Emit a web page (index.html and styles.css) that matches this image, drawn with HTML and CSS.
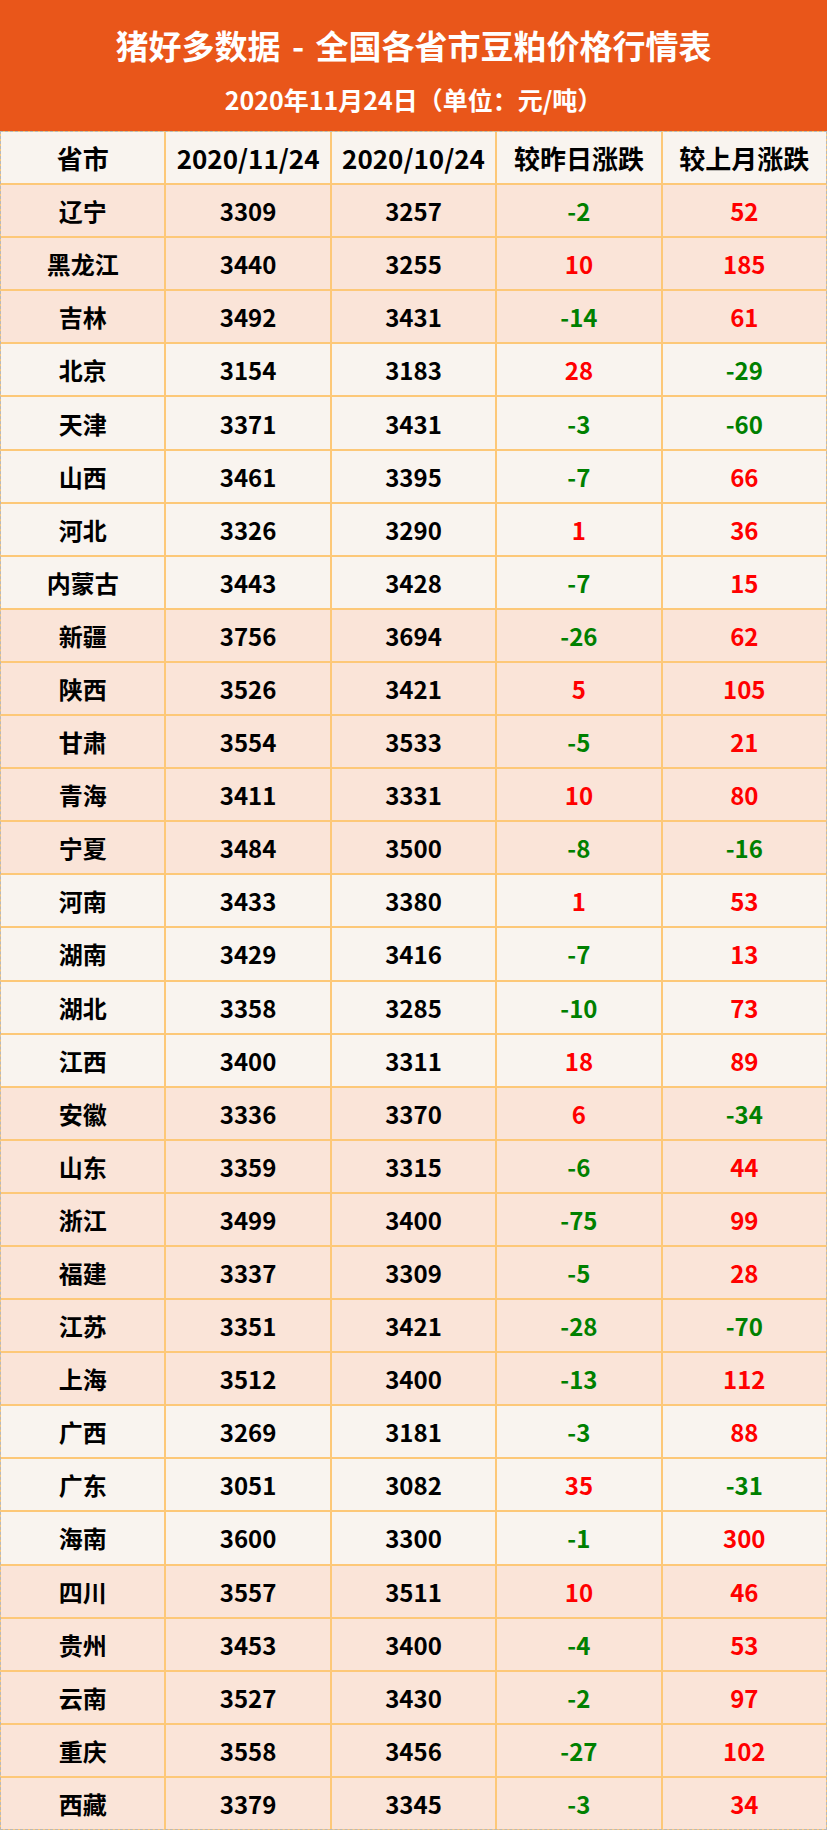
FILE: index.html
```html
<!DOCTYPE html>
<html lang="zh-CN">
<head>
<meta charset="utf-8">
<title>猪好多数据 - 全国各省市豆粕价格行情表</title>
<link rel="stylesheet" href="styles.css">
</head>
<body>
<div class="page">
  <header class="banner">
    <h1 class="title">猪好多数据 - 全国各省市豆粕价格行情表</h1>
    <p class="subtitle">2020年11月24日（单位：元/吨）</p>
  </header>
  <div class="table">
    <div class="row head"><div class="cell">省市</div><div class="cell">2020/11/24</div><div class="cell">2020/10/24</div><div class="cell">较昨日涨跌</div><div class="cell">较上月涨跌</div></div>
    <div class="row pink"><div class="cell">辽宁</div><div class="cell">3309</div><div class="cell">3257</div><div class="cell dn">-2</div><div class="cell up">52</div></div>
    <div class="row pink"><div class="cell">黑龙江</div><div class="cell">3440</div><div class="cell">3255</div><div class="cell up">10</div><div class="cell up">185</div></div>
    <div class="row pink"><div class="cell">吉林</div><div class="cell">3492</div><div class="cell">3431</div><div class="cell dn">-14</div><div class="cell up">61</div></div>
    <div class="row light"><div class="cell">北京</div><div class="cell">3154</div><div class="cell">3183</div><div class="cell up">28</div><div class="cell dn">-29</div></div>
    <div class="row light"><div class="cell">天津</div><div class="cell">3371</div><div class="cell">3431</div><div class="cell dn">-3</div><div class="cell dn">-60</div></div>
    <div class="row light"><div class="cell">山西</div><div class="cell">3461</div><div class="cell">3395</div><div class="cell dn">-7</div><div class="cell up">66</div></div>
    <div class="row light"><div class="cell">河北</div><div class="cell">3326</div><div class="cell">3290</div><div class="cell up">1</div><div class="cell up">36</div></div>
    <div class="row light"><div class="cell">内蒙古</div><div class="cell">3443</div><div class="cell">3428</div><div class="cell dn">-7</div><div class="cell up">15</div></div>
    <div class="row pink"><div class="cell">新疆</div><div class="cell">3756</div><div class="cell">3694</div><div class="cell dn">-26</div><div class="cell up">62</div></div>
    <div class="row pink"><div class="cell">陕西</div><div class="cell">3526</div><div class="cell">3421</div><div class="cell up">5</div><div class="cell up">105</div></div>
    <div class="row pink"><div class="cell">甘肃</div><div class="cell">3554</div><div class="cell">3533</div><div class="cell dn">-5</div><div class="cell up">21</div></div>
    <div class="row pink"><div class="cell">青海</div><div class="cell">3411</div><div class="cell">3331</div><div class="cell up">10</div><div class="cell up">80</div></div>
    <div class="row pink"><div class="cell">宁夏</div><div class="cell">3484</div><div class="cell">3500</div><div class="cell dn">-8</div><div class="cell dn">-16</div></div>
    <div class="row light"><div class="cell">河南</div><div class="cell">3433</div><div class="cell">3380</div><div class="cell up">1</div><div class="cell up">53</div></div>
    <div class="row light"><div class="cell">湖南</div><div class="cell">3429</div><div class="cell">3416</div><div class="cell dn">-7</div><div class="cell up">13</div></div>
    <div class="row light"><div class="cell">湖北</div><div class="cell">3358</div><div class="cell">3285</div><div class="cell dn">-10</div><div class="cell up">73</div></div>
    <div class="row light"><div class="cell">江西</div><div class="cell">3400</div><div class="cell">3311</div><div class="cell up">18</div><div class="cell up">89</div></div>
    <div class="row pink"><div class="cell">安徽</div><div class="cell">3336</div><div class="cell">3370</div><div class="cell up">6</div><div class="cell dn">-34</div></div>
    <div class="row pink"><div class="cell">山东</div><div class="cell">3359</div><div class="cell">3315</div><div class="cell dn">-6</div><div class="cell up">44</div></div>
    <div class="row pink"><div class="cell">浙江</div><div class="cell">3499</div><div class="cell">3400</div><div class="cell dn">-75</div><div class="cell up">99</div></div>
    <div class="row pink"><div class="cell">福建</div><div class="cell">3337</div><div class="cell">3309</div><div class="cell dn">-5</div><div class="cell up">28</div></div>
    <div class="row pink"><div class="cell">江苏</div><div class="cell">3351</div><div class="cell">3421</div><div class="cell dn">-28</div><div class="cell dn">-70</div></div>
    <div class="row pink"><div class="cell">上海</div><div class="cell">3512</div><div class="cell">3400</div><div class="cell dn">-13</div><div class="cell up">112</div></div>
    <div class="row light"><div class="cell">广西</div><div class="cell">3269</div><div class="cell">3181</div><div class="cell dn">-3</div><div class="cell up">88</div></div>
    <div class="row light"><div class="cell">广东</div><div class="cell">3051</div><div class="cell">3082</div><div class="cell up">35</div><div class="cell dn">-31</div></div>
    <div class="row light"><div class="cell">海南</div><div class="cell">3600</div><div class="cell">3300</div><div class="cell dn">-1</div><div class="cell up">300</div></div>
    <div class="row pink"><div class="cell">四川</div><div class="cell">3557</div><div class="cell">3511</div><div class="cell up">10</div><div class="cell up">46</div></div>
    <div class="row pink"><div class="cell">贵州</div><div class="cell">3453</div><div class="cell">3400</div><div class="cell dn">-4</div><div class="cell up">53</div></div>
    <div class="row pink"><div class="cell">云南</div><div class="cell">3527</div><div class="cell">3430</div><div class="cell dn">-2</div><div class="cell up">97</div></div>
    <div class="row pink"><div class="cell">重庆</div><div class="cell">3558</div><div class="cell">3456</div><div class="cell dn">-27</div><div class="cell up">102</div></div>
    <div class="row pink"><div class="cell">西藏</div><div class="cell">3379</div><div class="cell">3345</div><div class="cell dn">-3</div><div class="cell up">34</div></div>
  </div>
</div>
</body>
</html>
```
FILE: styles.css
```css
html, body {
  margin: 0;
  padding: 0;
  background: #ffffff;
}

.page {
  width: 827px;
  height: 1830px;
  display: flex;
  flex-direction: column;
  font-family: "Noto Sans CJK SC", "Noto Sans", sans-serif;
  font-weight: 700;
}

.banner {
  height: 131px;
  flex: none;
  background: #e9561a;
  color: #ffffff;
  display: flex;
  flex-direction: column;
  align-items: center;
  box-sizing: border-box;
  padding-top: 23px;
}

.title {
  margin: 0;
  font-size: 33px;
  line-height: 44px;
  font-weight: 700;
  word-spacing: 4px;
}

.subtitle {
  margin: 17px 0 0;
  font-size: 25px;
  line-height: 30px;
  font-weight: 700;
}

.table {
  flex: 1;
  display: flex;
  flex-direction: column;
  gap: 2px;
  background: #fdc878;
  border: 1px dashed #b8b8b8;
}

.row {
  flex: 1;
  display: grid;
  grid-template-columns: repeat(5, 1fr);
  gap: 2px;
}

.cell {
  display: flex;
  align-items: center;
  justify-content: center;
  font-size: 24px;
  color: #000000;
}

.head .cell {
  background: #f9f4ef;
  font-size: 26px;
}

.pink .cell {
  background: #fae4d8;
}

.light .cell {
  background: #f9f4ef;
}

.cell.up {
  color: #ff0000;
}

.cell.dn {
  color: #008000;
}
```
